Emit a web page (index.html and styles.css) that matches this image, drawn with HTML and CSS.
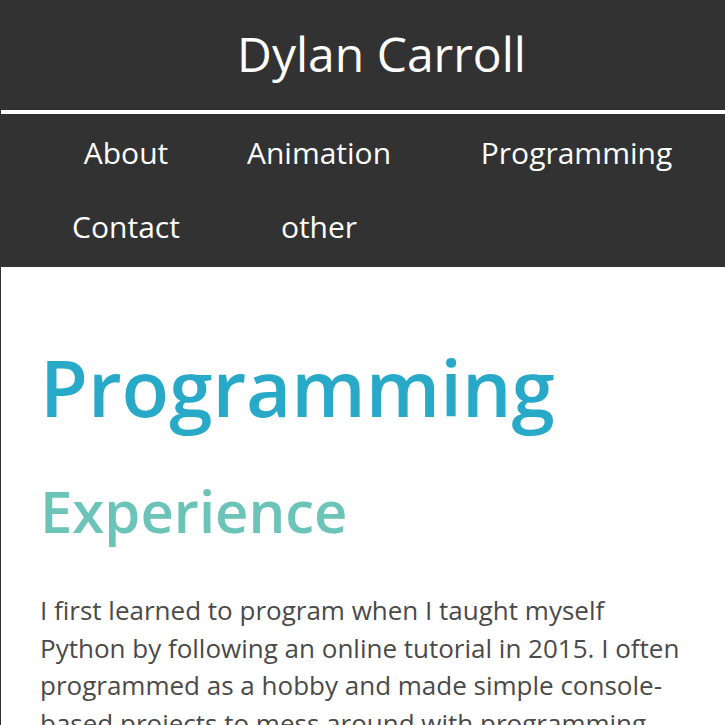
FILE: index.html
```html
<!DOCTYPE html>
<html lang="en">
<head>
<meta charset="utf-8">
<title>Dylan Carroll - Programming</title>
<link rel="stylesheet" href="styles.css">
</head>
<body>
<div class="page">
  <header class="site-header">
    <div class="site-title">Dylan Carroll</div>
  </header>
  <nav class="site-nav">
    <a class="nav-item" href="#">About</a>
    <a class="nav-item" href="#">Animation</a>
    <a class="nav-item nav-item-wide" href="#">Programming</a>
    <a class="nav-item" href="#">Contact</a>
    <a class="nav-item" href="#">other</a>
  </nav>
  <main class="content">
    <h1 class="page-title">Programming</h1>
    <h2 class="section-title">Experience</h2>
    <p class="body-text">I first learned to program when I taught myself Python by following an online tutorial in 2015. I often programmed as a hobby and made simple console-based projects to mess around with programming concepts and learn more about how code works.</p>
  </main>
</div>
</body>
</html>
```

FILE: styles.css
```css
html, body {
  margin: 0;
  padding: 0;
  overflow: hidden;
  background: #ffffff;
}

body {
  font-family: "Open Sans", "DejaVu Sans", sans-serif;
}

.page {
  border-left: 1px solid #323232;
  min-height: 725px;
}

.site-header {
  background: #323232;
  height: 114px;
  box-sizing: border-box;
  padding: 30px 0 0 37px;
  border-bottom: 4px solid #ffffff;
}

.site-title {
  color: #ffffff;
  font-size: 48px;
  line-height: 48px;
  text-align: center;
}

.site-nav {
  background: #323232;
  display: grid;
  grid-template-columns: 190px 196px 1fr;
  padding: 2px 0 3px 30px;
}

.nav-item {
  color: #ffffff;
  text-decoration: none;
  font-size: 30px;
  line-height: 74px;
  text-align: center;
}

.nav-item-wide {
  padding-left: 11px;
}

.content {
  padding: 0 36px 0 39px;
}

.page-title {
  margin: 74px 0 0;
  font-size: 78px;
  line-height: 1.2;
  font-weight: 600;
  color: #27a9c7;
}

.section-title {
  margin: 41px 0 0;
  font-size: 58px;
  line-height: 1.2;
  font-weight: 600;
  color: #6cc4b9;
}

.body-text {
  margin: 47px 0 0;
  font-size: 26px;
  line-height: 37.5px;
  color: #4a4a4a;
}
```
